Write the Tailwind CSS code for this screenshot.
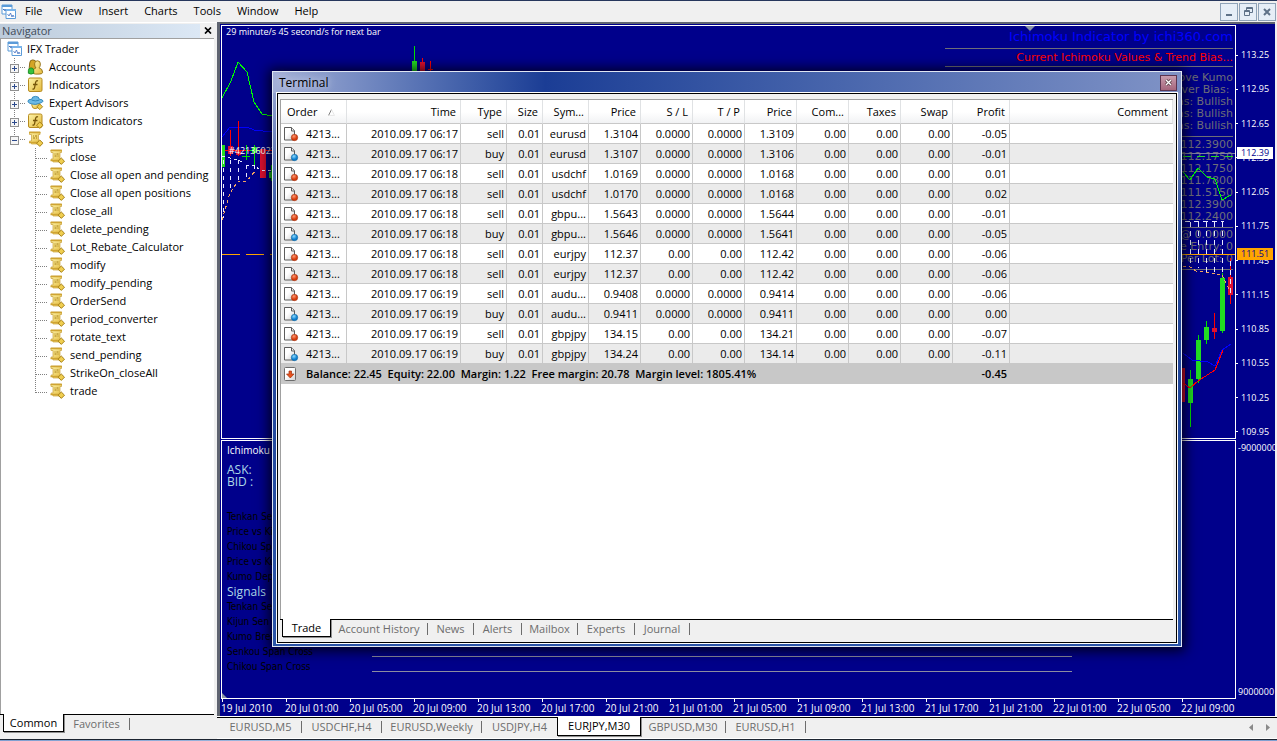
<!DOCTYPE html>
<html lang="en">
<head>
<meta charset="utf-8">
<title>IFX Trader</title>
<script src="https://cdn.jsdelivr.net/npm/@tailwindcss/browser@4"></script>
</head>
<body class="h-screen overflow-hidden bg-[#f0f0f0] font-['Open_Sans',sans-serif] text-[11px] leading-4 text-black">
<svg class="absolute h-0 w-0" aria-hidden="true">
  <defs>
    <linearGradient id="gold" x1="0" y1="0" x2="1" y2="1"><stop offset="0" stop-color="#fdf3a8"/><stop offset="1" stop-color="#e3b93c"/></linearGradient>
    <linearGradient id="page" x1="0" y1="0" x2="1" y2="1"><stop offset="0.4" stop-color="#fff"/><stop offset="1" stop-color="#cfcfcf"/></linearGradient>
    <radialGradient id="red" cx="0.4" cy="0.3"><stop offset="0" stop-color="#ff9a72"/><stop offset="1" stop-color="#d8390a"/></radialGradient>
    <radialGradient id="blue" cx="0.4" cy="0.3"><stop offset="0" stop-color="#8fdcff"/><stop offset="1" stop-color="#0a7fd0"/></radialGradient>
  </defs>
  <symbol id="i-app" viewBox="0 0 16 16"><path d="M1 1h10v9H1z" fill="#fff" stroke="#5b9bd8"/><path d="M1 1h10v2H1z" fill="#5b9bd8"/><path d="M2 6l1-1 1 2 1-2 1 1" fill="none" stroke="#3f6fc0"/><path d="M5 5.500h9.500v9H5z" fill="#fff" stroke="#5b9bd8"/><path d="M5 5h10v2H5z" fill="#7ab4ea"/><path d="M6.500 10l1.500 2 1.500-3 1.500 4 1-2 1 2" fill="none" stroke="#3f6fc0" stroke-width=".8"/></symbol>
  <symbol id="i-diamond" viewBox="0 0 16 16"><path d="M12.300 9l3.200 3.200-3.200 3.200-3.200-3.200z" fill="#f0ce50" stroke="#a57f16"/></symbol>
  <symbol id="i-accounts" viewBox="0 0 18 18"><path d="M2.500 4.500Q2.500 1 6 1t4 3.500-1 5l3 3v3H2V9.500z" fill="#d3a526" stroke="#7d5d0c"/><path d="M8 5.500Q8 2 11.200 2t3.300 3.500q0 3-1.500 4.500 4 1 4 5 0 2-4 2H9q-3 0-3-2.500 0-3.500 3.500-4.500Q8 8.500 8 5.500z" fill="url(#gold)" stroke="#8e6a10"/><path d="M1 13q0-3 3-3t3 3v3q-3 2-6 0z" fill="#35c23c" stroke="#168a22"/></symbol>
  <symbol id="i-func" viewBox="0 0 16 16"><rect x="1" y="1" width="13.500" height="13.500" rx="1.500" fill="url(#gold)" stroke="#b78b1e"/><path d="M10.500 4Q8.500 3 8 6l-.8 4Q7 12.500 5 12M5.500 7.500h4.500" fill="none" stroke="#76560a" stroke-width="1.300"/></symbol>
  <symbol id="i-expert" viewBox="0 0 18 16"><path d="M6 8q3 2.500 6.500 0l1 3q-2 3-5 3T5 10z" fill="url(#gold)" stroke="#b78b1e"/><path d="M1 6q0-2 4-2 0-3 4-3t4 3q4 .3 4 2t-8 3.500Q1 9 1 6z" fill="#6cb9e4" stroke="#2f86bb"/><path d="M5 5q4 1.500 8 0" fill="none" stroke="#2f86bb"/><path d="M13.500 9l3 3-3 3-3-3z" fill="#f0ce50" stroke="#a57f16"/></symbol>
  <symbol id="i-script" viewBox="0 0 16 16"><path d="M2 1h10.500v2.500H11V10q2 0 2 2v1H4v-1Q2 12 2 10h2V3.500H2z" fill="url(#gold)" stroke="#c9a23a" stroke-width=".7"/><path d="M1.500 1.500h11.500M1.500 11.500H10" stroke="#cfa432" stroke-width="1.300"/><path d="M5.500 5h1m1 0h2M5.500 7h2m1 0h1" stroke="#a27c18"/><use href="#i-diamond"/></symbol>
  <symbol id="i-sell" viewBox="0 0 16 16"><path d="M1.500 1.500h7l3 3V14h-10z" fill="url(#page)" stroke="#5c5c5c"/><path d="M8.500 1.500V5h3" fill="#eee" stroke="#5c5c5c"/><circle cx="11.500" cy="11.500" r="3.200" fill="url(#red)" stroke="#a03010" stroke-width=".6"/></symbol>
  <symbol id="i-buy" viewBox="0 0 16 16"><path d="M1.500 1.500h7l3 3V14h-10z" fill="url(#page)" stroke="#5c5c5c"/><path d="M8.500 1.500V5h3" fill="#eee" stroke="#5c5c5c"/><circle cx="11.500" cy="11.500" r="3.200" fill="url(#blue)" stroke="#0a5f9a" stroke-width=".6"/></symbol>
  <symbol id="i-balance" viewBox="0 0 16 16"><rect x="1.500" y="1.500" width="11" height="13" rx="1" fill="url(#page)" stroke="#6c6c6c"/><path d="M6 5h2.500v3H11l-3.700 4L3.500 8H6z" fill="#e8521c" stroke="#a03010" stroke-width=".7"/></symbol>
  <symbol id="i-plus" viewBox="0 0 24 18"><path d="M12.500 0v18M12 9.500h11" stroke="#808080" stroke-dasharray="1 1"/><rect x="8.500" y="6.500" width="8" height="8" fill="#f6f6f6" stroke="#919191"/><path d="M10 10.500h5M12.500 8v5" stroke="#2c4a8c"/></symbol>
  <symbol id="i-minus" viewBox="0 0 24 18"><path d="M12.500 0v7M12 9.500h11" stroke="#808080" stroke-dasharray="1 1"/><rect x="8.500" y="6.500" width="8" height="8" fill="#f6f6f6" stroke="#919191"/><path d="M10 10.500h5" stroke="#2c4a8c"/></symbol>
  <symbol id="i-branch" viewBox="0 0 14 18"><path d="M1.500 0v18M2 10.500h11" stroke="#808080" stroke-dasharray="1 1"/></symbol>
  <symbol id="i-branch-end" viewBox="0 0 14 18"><path d="M1.500 0v11M2 10.500h11" stroke="#808080" stroke-dasharray="1 1"/></symbol>
</svg>

<div class="relative flex h-full flex-col">
  <header class="flex h-[22px] shrink-0 items-center border-t border-[#26365c] pr-px">
    <svg class="ml-px h-4 w-4"><use href="#i-app"/></svg>
    <nav class="ml-[8px] flex gap-[16px] pb-[2px]">
      <button>File</button><button>View</button><button>Insert</button><button>Charts</button><button>Tools</button><button>Window</button><button>Help</button>
    </nav>
    <div class="ml-auto flex gap-px">
      <button aria-label="Minimize" class="h-[18px] w-[18px] border border-[#8fa3b8] bg-[#e6eef7]"><svg viewBox="0 0 16 16"><path d="M5 11h6" stroke="#5f7288" stroke-width="2"/></svg></button>
      <button aria-label="Restore" class="h-[18px] w-[18px] border border-[#8fa3b8] bg-[#e6eef7]"><svg viewBox="0 0 16 16"><path d="M6.500 6V3.500h6v5H10M6.500 4.500h6M4.500 6.500h5v5h-5zM4.500 7.500h5" fill="none" stroke="#5f7288"/></svg></button>
      <button aria-label="Close" class="h-[18px] w-[18px] border border-[#8fa3b8] bg-[#e6eef7]"><svg viewBox="0 0 16 16"><path d="M5 5l6 6M11 5l-6 6" stroke="#5f7288" stroke-width="2"/></svg></button>
    </div>
  </header>

  <div class="flex min-h-0 flex-1">
    <aside class="flex w-[217px] shrink-0 flex-col border-t border-white pb-[6px] pr-[3px]">
      <div class="flex h-[15px] items-center">
        <h2 class="w-[200px] bg-linear-to-r from-[#bccbdb] to-[#dce8f5] pl-[2px] leading-[14px] text-[#3f4b58]">Navigator</h2>
        <button aria-label="Close navigator" class="ml-[4px]"><svg class="h-[7px] w-[8px]" viewBox="0 0 8 7"><path d="M1 .5l6 6M7 .5l-6 6" stroke="#000" stroke-width="1.700"/></svg></button>
      </div>
      <div class="min-h-0 flex-1 overflow-hidden border-l border-t border-[#a0a0a0] bg-white">
        <ul id="tree" class="whitespace-nowrap pt-px">
          <li class="flex h-[18px] items-center"><svg class="ml-[6px] h-4 w-4"><use href="#i-app"/></svg><span class="ml-[4px]">IFX Trader</span></li>
        </ul>
      </div>
      <div class="flex h-[19px] shrink-0 items-start">
        <span class="h-px w-[3px] bg-black"></span>
        <button class="h-[18px] w-[61px] border-x border-b border-black bg-white leading-[16px] shadow-[1px_1px_0_#909090]">Common</button>
        <div class="flex h-full flex-1 items-center border-t border-black text-[#6d6d6d]"><button class="w-[66px] border-r border-[#6d6d6d] text-center leading-[12px]">Favorites</button></div>
      </div>
    </aside>

    <main class="flex min-w-0 flex-1 flex-col">
      <section class="mr-[2px] flex min-h-0 flex-1 overflow-hidden border-l-3 border-t-2 border-[#5f6470] bg-[#00008b] pl-px pt-px text-[9px] text-white" aria-label="Chart">
        <div class="flex min-w-0 flex-1 flex-col">
          <div class="relative min-h-0 flex-[414] border border-white">
            <p class="pl-[4px] leading-[12px]">29 minute/s 45 second/s for next bar</p>
            <svg class="absolute left-0 top-0 h-[412px] w-[250px]" viewBox="222 26 250 412" fill="none" shape-rendering="crispEdges">
              <path d="M222 98l9-17 7-19 9 10 7 30 8 12 10 2" stroke="#00ff00"/>
              <path d="M222 137l8-10h17l7 3 18 2" stroke="#0000ff"/>
              <path d="M222 150.500h50" stroke="#ff0000"/>
              <path d="M224 145v22M246.500 145v15M242 156.500h8M254.500 145v20M250 150.500h10M271.500 165v16" stroke="#00e000"/>
              <path d="M222 145h3v22h-3zM252 147h5v6h-5zM269 172h4v6h-4z" fill="#22dd22"/>
              <path d="M230.500 130v26M238.500 121v35" stroke="#ff0000"/>
              <path d="M228 146h5v8h-5zM236 151h5v4h-5zM260 149h6v29h-6z" fill="#e01030"/>
              <path d="M223.500 160v58M230.500 160v30M238.500 160v21M246.500 165v16M254.500 165v8" stroke="#e8e8ff" stroke-dasharray="4 4"/>
              <path d="M222 156l12 3 9 3M246 165h8l6 5h12" stroke="#e8e8ff" stroke-dasharray="3 3"/>
              <path d="M222 220l8-27 8-12h9l9-11" stroke="#f4a460" stroke-dasharray="3 3"/>
              <path d="M222 254.500h50" stroke="#ffa500" stroke-dasharray="18 6"/>
              <path d="M414.500 46v15" stroke="#00e000"/><path d="M412 61h5v12h-5z" fill="#22dd22"/>
              <path d="M422.500 58v4M430.500 61v10M428 69.500h5" stroke="#ff0000"/><path d="M420 62h5v10h-5z" fill="#e01030"/>
            </svg>
            <span class="absolute left-[7px] top-[117px]">#42136023</span>
            <svg class="absolute right-[200px] top-0 h-[5px] w-[10px]" viewBox="0 0 10 5"><path d="M0 0h10L5 5z" fill="#8a94a4"/></svg>
            <div class="absolute right-[2px] top-[3px] flex flex-col items-end whitespace-pre font-['DejaVu_Sans',sans-serif] text-[11px] text-[#6e6e78]">
              <span class="text-[13px] leading-[16px] text-[#0000ff]">Ichimoku Indicator by ichi360.com</span>
              <span class="mt-[3px] w-[288px] border-y border-[#6e6e78] text-right leading-[17px] text-[#ff0000]">Current Ichimoku Values &amp; Trend Bias...</span>
              <span class="mt-[5px] leading-[12px]">Above Kumo</span>
              <span class="leading-[12px]">ver Bias: </span>
              <span class="leading-[12px]">Bias: Bullish</span>
              <span class="leading-[12px]">Bias: Bullish</span>
              <span class="leading-[12px]">Bias: Bullish</span>
              <span class="mt-[4px] w-[288px] border-t border-[#6e6e78] pt-[2px] text-right leading-[12px]">112.3900</span>
              <span class="leading-[12px]">112.1750</span>
              <span class="leading-[12px]">112.1750</span>
              <span class="leading-[12px]">111.7800</span>
              <span class="leading-[12px]">111.5150</span>
              <span class="leading-[12px]">112.3900</span>
              <span class="leading-[12px]">112.2400</span>
              <span class="mt-[4px] w-[288px] border-t border-[#6e6e78] pt-px text-right leading-[12px]">@ 0.0000</span>
              <span class="leading-[12px]">e Entry: 0</span>
              <span class="w-[288px] border-b border-[#6e6e78] pb-[4px] text-right leading-[12px]">Per Lot: 0</span>
            </div>
            <svg class="absolute right-0 top-0 h-[412px] w-[60px]" viewBox="1175 26 60 412" fill="none" shape-rendering="crispEdges">
              <path d="M1175 153.500h60" stroke="#8080a0"/>
              <path d="M1183 156.500h52" stroke="#22dd22" stroke-dasharray="8 6"/>
              <path d="M1183 172l7 8 8-12 9 9 8 2 7 21 9-5" stroke="#00ff00"/>
              <path d="M1185 221.500h39M1190.500 222v46M1198.500 222v46M1206.500 222v50M1214.500 222v50M1222.500 222v52" stroke="#e8e8ff" stroke-dasharray="5 4"/>
              <path d="M1175 254.500h60" stroke="#ffa500"/>
              <path d="M1183 266l7 1 6 4 14 2 12 2" stroke="#f4a460" stroke-dasharray="3 3"/>
              <path d="M1222.500 273v60M1206.500 321v23M1198.500 335v48M1190.500 370v57" stroke="#00e000"/>
              <path d="M1220 278h5v53h-5zM1204 327h5v13h-5zM1196 340h5v39h-5zM1188 379h5v24h-5z" fill="#22dd22"/>
              <path d="M1230.500 258v46M1214.500 313v26M1182.500 368v34" stroke="#ff0000"/>
              <path d="M1228 277h5v18h-5zM1212 328h5v4h-5zM1180 368h5v34h-5z" fill="#e01030"/>
              <path d="M1230.500 261v34" stroke="#e8e8ff" stroke-dasharray="5 4"/>
              <path d="M1222 275l8 16" stroke="#f4a460" stroke-dasharray="3 3"/>
              <path d="M1183 353l9 7 16 2 7 4 7-16 9-6" stroke="#0000ff"/>
              <path d="M1183 383l7 5 8-7 17-11 8-20" stroke="#ff0000"/>
            </svg>
          </div>
          <div class="relative mt-px min-h-0 flex-[259] border border-white">
            <div class="pl-[5px] pt-[2px] font-['DejaVu_Sans_Condensed','DejaVu_Sans',sans-serif] text-[10px] leading-[15px] text-black">
              <p class="font-['Open_Sans',sans-serif] text-white">Ichimoku Monitor</p>
              <p class="pt-[6px] font-['Open_Sans',sans-serif] text-[12px] leading-[12px] text-[#add8e6]">ASK:<br>BID :</p>
              <p class="pt-[21px]">Tenkan Sen</p><p>Price vs Kijun</p><p>Chikou Span</p><p>Price vs Kumo</p><p>Kumo Depth</p>
              <p class="font-['Open_Sans',sans-serif] text-[12px] text-[#add8e6]">Signals</p>
              <p>Tenkan Sen</p><p>Kijun Sen Cross</p><p>Kumo Break</p><p>Senkou Span Cross</p><p>Chikou Span Cross</p>
            </div>
            <div class="absolute left-[150px] top-[215px] h-[16px] w-[700px] border-y border-[#8c8ca0]"></div>
            <svg class="absolute bottom-0 left-0 h-[5px] w-[5px]" viewBox="0 0 5 5"><path d="M0 0v5h5z" fill="#8a94a4"/></svg>
          </div>
          <div id="times" class="flex h-[17px] shrink-0 overflow-hidden whitespace-nowrap text-[10px]"></div>
        </div>
        <div class="flex w-[39px] shrink-0 flex-col overflow-hidden whitespace-nowrap">
          <div class="relative min-h-0 flex-[414]">
            <ol id="prices" class="flex h-full flex-col justify-between pb-px pt-[24px]"></ol>
            <span class="absolute left-px top-[122px] w-[36px] bg-white pl-[4px] leading-[12px] text-[#00008b]">112.39</span>
            <span class="absolute left-px top-[223px] w-[36px] bg-[#ffa500] pl-[4px] leading-[12px] text-[#00008b]">111.51</span>
          </div>
          <div class="mt-px flex min-h-0 flex-[259] flex-col justify-between"><span class="pl-[2px]">-9000000</span><span class="pl-[2px] leading-[14px]">9000000</span></div>
          <div class="h-[17px] shrink-0"></div>
        </div>
      </section>
      <div class="h-px shrink-0 bg-white"></div>
      <nav class="flex h-[22px] shrink-0 items-start border-b border-white text-[#6d6d6d]" aria-label="Charts">
        <div class="flex h-[19px] w-[340px] shrink-0 items-center border-t border-black pl-[3px] leading-[12px]">
          <button class="w-[82px] border-r border-[#6d6d6d]">EURUSD,M5</button><button class="w-[80px] border-r border-[#6d6d6d]">USDCHF,H4</button><button class="w-[100px] border-r border-[#6d6d6d]">EURUSD,Weekly</button><button class="w-[75px]">USDJPY,H4</button>
        </div>
        <button class="h-[19px] w-[84px] shrink-0 border-x border-b border-black bg-white leading-[18px] text-black shadow-[1px_1px_0_#909090]">EURJPY,M30</button>
        <div class="flex h-[19px] flex-1 items-center border-t border-black leading-[12px]">
          <button class="w-[85px] border-r border-[#6d6d6d]">GBPUSD,M30</button><button class="w-[80px] border-r border-[#6d6d6d]">EURUSD,H1</button>
          <button aria-label="Scroll left" class="ml-auto mr-[13px]"><svg class="h-[7px] w-[4px]" viewBox="0 0 4 7"><path d="M4 0v7L0 3.500z" fill="#8a8a8a"/></svg></button>
          <button aria-label="Scroll right" class="mr-[7px]"><svg class="h-[7px] w-[4px]" viewBox="0 0 4 7"><path d="M0 0v7l4-3.500z" fill="#8a8a8a"/></svg></button>
        </div>
      </nav>
    </main>
  </div>
  <footer class="h-[2px] shrink-0 border-t border-[#1c2430] bg-linear-to-r from-[#7f9fd0] via-[#c8d8ee] to-[#7f9fd0]"></footer>

  <section aria-label="Terminal" class="absolute bottom-[94px] left-[272px] right-[95px] top-[71px] flex flex-col border border-[#dfe6f2] bg-linear-to-b from-[#a3afd6] via-[#1f4196] via-30% to-[#2a54a8] px-[4px] pb-[3px] shadow-[0_1px_12px_3px_rgba(0,0,0,0.8)]">
    <div class="-mx-[4px] flex h-[21px] shrink-0 items-center bg-linear-to-r from-[#a3afd6] via-[#1b3d95] via-30% to-[#8093c6] pl-[6px] pr-[4px]">
      <h2 class="text-[12px] [text-shadow:0_0_8px_#fff]">Terminal</h2>
      <button aria-label="Close terminal" class="ml-auto flex h-[16px] w-[17px] items-center justify-center border border-[#5b3550] bg-linear-to-b from-[#c99dae] to-[#a5667c]"><svg class="h-[9px] w-[9px]" viewBox="0 0 9 9"><path d="M2 2l5 5M7 2l-5 5" stroke="#5a4048" stroke-width="3"/><path d="M2 2l5 5M7 2l-5 5" stroke="#fff" stroke-width="1.300"/></svg></button>
    </div>
    <div class="flex min-h-0 flex-1 flex-col border border-black bg-[#f0f0f0] pb-[3px] pl-[2px] pr-[3px] pt-[5px] outline-1 outline-white">
      <div class="min-h-0 flex-1 overflow-hidden border-l border-t border-[#a0a0a0] bg-white">
        <table class="w-full table-fixed border-separate border-spacing-0 whitespace-nowrap text-right">
          <colgroup><col class="w-[66px]"><col class="w-[114px]"><col class="w-[46px]"><col class="w-[36px]"><col class="w-[46px]"><col class="w-[52px]"><col class="w-[52px]"><col class="w-[52px]"><col class="w-[52px]"><col class="w-[52px]"><col class="w-[52px]"><col class="w-[52px]"><col class="w-[57px]"><col></colgroup>
          <thead><tr id="heads" class="h-[24px] bg-linear-to-b from-white from-50% to-[#f0f1f3]"></tr></thead>
          <tbody id="rows"></tbody>
        </table>
      </div>
      <div class="flex h-[20px] shrink-0 items-start">
        <span class="h-px w-[2px] bg-black"></span>
        <button class="h-[18px] w-[49px] border-x border-b border-black bg-white leading-[17px] shadow-[1px_1px_0_#909090]">Trade</button>
        <div class="flex h-[19px] flex-1 items-center border-t border-black leading-[12px] text-[#6d6d6d]">
          <button class="w-[97px] border-r border-[#6d6d6d]">Account History</button><button class="w-[46px] border-r border-[#6d6d6d]">News</button><button class="w-[48px] border-r border-[#6d6d6d]">Alerts</button><button class="w-[56px] border-r border-[#6d6d6d]">Mailbox</button><button class="w-[57px] border-r border-[#6d6d6d]">Experts</button><button class="w-[55px] border-r border-[#6d6d6d]">Journal</button>
        </div>
      </div>
    </div>
  </section>
</div>

<script>
const groups = [['plus','accounts','Accounts'],['plus','func','Indicators'],['plus','expert','Expert Advisors'],['plus','func','Custom Indicators'],['minus','script','Scripts']];
const scripts = ['close','Close all open and pending','Close all open positions','close_all','delete_pending','Lot_Rebate_Calculator','modify','modify_pending','OrderSend','period_converter','rotate_text','send_pending','StrikeOn_closeAll','trade'];
document.getElementById('tree').innerHTML += groups.map(([sign, icon, name]) =>
  `<li class="flex h-[18px] items-center"><svg class="ml-px h-[18px] w-[24px]"><use href="#i-${sign}"/></svg><svg class="ml-px h-4 w-[17px]"><use href="#i-${icon}"/>${name[0] === 'C' ? '<use href="#i-diamond"/>' : ''}</svg><span class="ml-[5px]">${name}</span></li>`).join('')
  + scripts.map((name, i) =>
  `<li class="flex h-[18px] items-center"><svg class="ml-[33px] h-[18px] w-[14px]"><use href="#i-branch${i === scripts.length - 1 ? '-end' : ''}"/></svg><svg class="ml-px h-4 w-4"><use href="#i-script"/></svg><span class="ml-[5px]">${name}</span></li>`).join('');

document.getElementById('times').innerHTML = ['19 Jul 2010','20 Jul 01:00','20 Jul 05:00','20 Jul 09:00','20 Jul 13:00','20 Jul 17:00','20 Jul 21:00','21 Jul 01:00','21 Jul 05:00','21 Jul 09:00','21 Jul 13:00','21 Jul 17:00','21 Jul 21:00','22 Jul 01:00','22 Jul 05:00','22 Jul 09:00']
  .map(t => `<div class="w-[64px] shrink-0"><div class="ml-px h-[3px] w-px bg-white"></div><span class="block leading-[12px]">${t}</span></div>`).join('');

document.getElementById('prices').innerHTML = ['113.25','112.95','112.65','112.35','112.05','111.75','111.45','111.15','110.85','110.55','110.25','109.95']
  .map(p => `<li class="flex h-[12px] items-center gap-[3px]"><span class="h-px w-[2px] bg-white"></span><span class="leading-[12px]">${p}</span></li>`).join('');

document.getElementById('heads').innerHTML = ['Order','Time','Type','Size','Sym...','Price','S / L','T / P','Price','Com...','Taxes','Swap','Profit','Comment']
  .map((h, i) => i
    ? `<th scope="col" class="border-b border-r border-b-[#c8c8c8] border-r-[#e0e2e4] pr-[4px] font-normal">${h}</th>`
    : `<th scope="col" class="border-b border-r border-b-[#c8c8c8] border-r-[#e0e2e4] pl-[6px] text-left font-normal">${h}<svg class="ml-[11px] inline h-[7px] w-[7px]" viewBox="0 0 7 7"><path d="M.5 6.500L3.500 .5" stroke="#808080"/><path d="M3.500 .5l3 6h-6" fill="none" stroke="#e8e8e8"/></svg></th>`).join('');

const orders = [
  ['06:17','sell','eurusd','1.3104','0.0000','1.3109','-0.05'],
  ['06:17','buy','eurusd','1.3107','0.0000','1.3106','-0.01'],
  ['06:18','sell','usdchf','1.0169','0.0000','1.0168','0.01'],
  ['06:18','sell','usdchf','1.0170','0.0000','1.0168','0.02'],
  ['06:18','sell','gbpu...','1.5643','0.0000','1.5644','-0.01'],
  ['06:18','buy','gbpu...','1.5646','0.0000','1.5641','-0.05'],
  ['06:18','sell','eurjpy','112.37','0.00','112.42','-0.06'],
  ['06:18','sell','eurjpy','112.37','0.00','112.42','-0.06'],
  ['06:19','sell','audu...','0.9408','0.0000','0.9414','-0.06'],
  ['06:19','buy','audu...','0.9411','0.0000','0.9411','0.00'],
  ['06:19','sell','gbpjpy','134.15','0.00','134.21','-0.07'],
  ['06:19','buy','gbpjpy','134.24','0.00','134.14','-0.11']];
document.getElementById('rows').innerHTML = orders.map(([time, type, sym, open, stop, price, profit]) =>
  `<tr class="h-[20px] even:bg-[#ebebeb]"><td class="border-b border-r border-[#c8c8c8] p-0"><div class="flex items-center gap-[7px] pl-[2px]"><svg class="h-4 w-4"><use href="#i-${type}"/></svg>4213...</div></td>`
  + ['2010.09.17 ' + time, type, '0.01', sym, open, stop, stop, price, '0.00', '0.00', '0.00', profit]
    .map(v => `<td class="border-b border-r border-[#c8c8c8] py-0 pl-0 pr-[2px]">${v}</td>`).join('')
  + '<td class="border-b border-[#c8c8c8] p-0"></td></tr>').join('')
  + '<tr class="h-[20px] bg-[#c8c8c8] font-semibold"><td colspan="12" class="p-0"><div class="flex items-center gap-[7px] whitespace-pre pl-[2px]"><svg class="h-4 w-4"><use href="#i-balance"/></svg>Balance: 22.45  Equity: 22.00  Margin: 1.22  Free margin: 20.78  Margin level: 1805.41%</div></td><td class="py-0 pl-0 pr-[3px]">-0.45</td><td class="p-0"></td></tr>';
</script>
</body>
</html>
